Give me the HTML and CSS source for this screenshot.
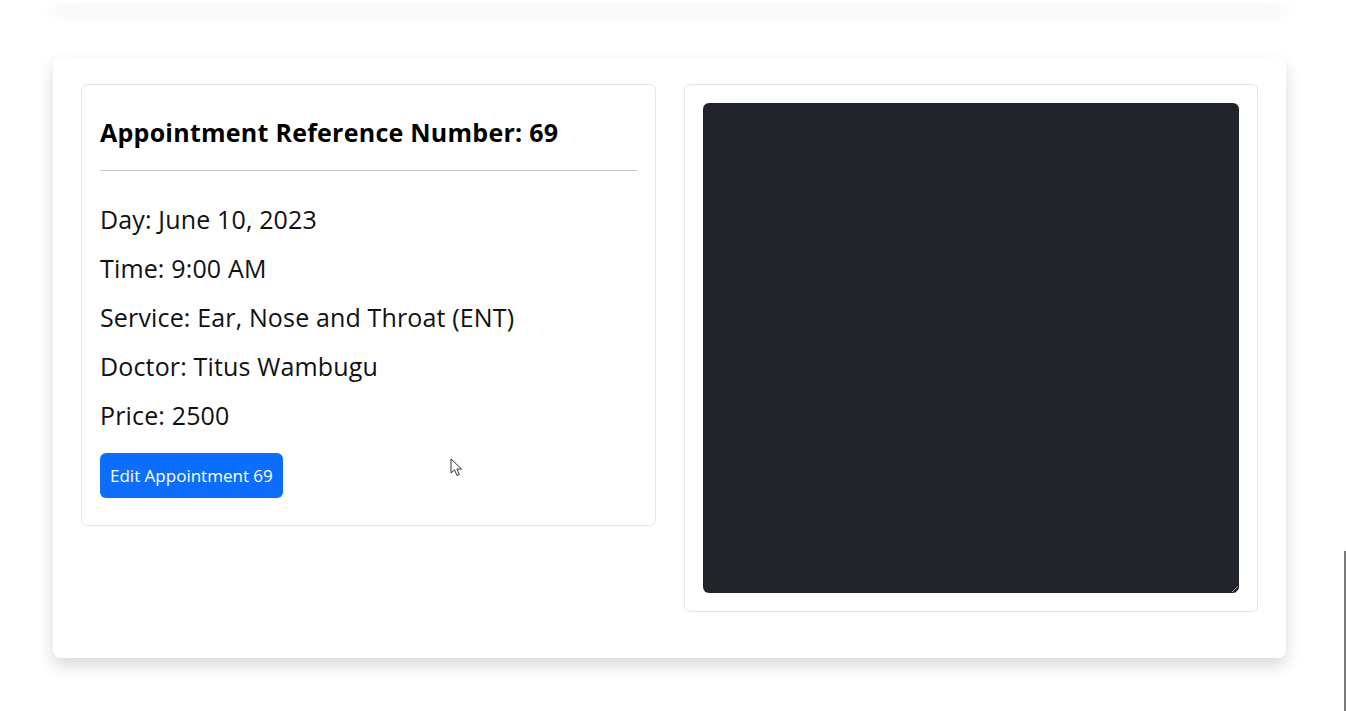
FILE: index.html
```html
<!DOCTYPE html>
<html lang="en">
<head>
<meta charset="utf-8">
<title>Appointment 69</title>
<link rel="stylesheet" href="styles.css">
</head>
<body>
<div class="page">
  <div class="top-card"></div>
  <main class="main-card">
    <div class="row">
      <section class="card info-card">
        <h4 class="ref-title">Appointment Reference Number: 69</h4>
        <hr class="divider">
        <p class="detail">Day: June 10, 2023</p>
        <p class="detail">Time: 9:00 AM</p>
        <p class="detail">Service: Ear, Nose and Throat (ENT)</p>
        <p class="detail">Doctor: Titus Wambugu</p>
        <p class="detail">Price: 2500</p>
        <button class="btn-edit" type="button">Edit Appointment 69</button>
      </section>
      <section class="card notes-card">
        <textarea class="notes" aria-label="Notes"></textarea>
      </section>
    </div>
  </main>
</div>
<div class="edge-line"></div>
<svg class="cursor" width="14" height="20" viewBox="0 0 14 20" aria-hidden="true">
  <path d="M1 1 L1 15 L4.5 11.8 L7 17.5 L9.3 16.5 L6.9 11 L11.5 11 Z" fill="#fff" stroke="#333" stroke-width="1" stroke-linejoin="round"/>
</svg>
</body>
</html>
```

FILE: styles.css
```css
html, body {
  margin: 0;
  padding: 0;
  background: #fff;
  overflow: hidden;
}

body {
  width: 1346px;
  height: 711px;
  position: relative;
  font-family: "Open Sans", "Noto Sans", "Liberation Sans", sans-serif;
  color: #212529;
}

.page {
  padding-left: 53px;
  width: 1233px;
}

.top-card {
  height: 3px;
  background: #fff;
  border-radius: 0 0 8px 8px;
  box-shadow: 0 8px 18px rgba(0, 0, 0, 0.2);
}

.main-card {
  margin-top: 54px;
  height: 601px;
  box-sizing: border-box;
  padding: 27px 28px 46px;
  background: #fff;
  border-radius: 8px;
  box-shadow: 0 8px 16px rgba(0, 0, 0, 0.15);
}

.row {
  display: grid;
  grid-template-columns: 575px 574px;
  column-gap: 28px;
  align-items: start;
}

.card {
  border: 1px solid #e5e5e5;
  border-radius: 6px;
  padding: 18px;
  background: #fff;
}

.info-card {
  display: flex;
  flex-direction: column;
  align-items: flex-start;
}

.ref-title {
  margin: 15px 0 8px;
  font-size: 25px;
  line-height: 29px;
  letter-spacing: 0.25px;
  font-weight: 700;
  color: #000;
}

.divider {
  align-self: stretch;
  margin: 15px 0 32px;
  border: 0;
  border-top: 1px solid #c4c4c4;
  height: 0;
}

.detail {
  margin: 0 0 16px;
  font-size: 25px;
  line-height: 33px;
  letter-spacing: 0.15px;
  color: #111;
}

.btn-edit {
  margin: 5px 0 9px;
  height: 45px;
  padding: 0 10px;
  font-family: inherit;
  font-size: 17px;
  color: #fff;
  background: #0d6efd;
  border: 0;
  border-radius: 6px;
}

.notes-card {
  display: flex;
}

.notes {
  display: block;
  width: 537px;
  height: 490px;
  margin: 0;
  box-sizing: border-box;
  background: #212529;
  border: 0;
  border-radius: 6px;
  color: #fff;
}

.edge-line {
  position: absolute;
  left: 1344px;
  top: 551px;
  width: 2px;
  height: 160px;
  background: #7a7a7a;
}

.cursor {
  position: absolute;
  left: 450px;
  top: 458px;
}
```
